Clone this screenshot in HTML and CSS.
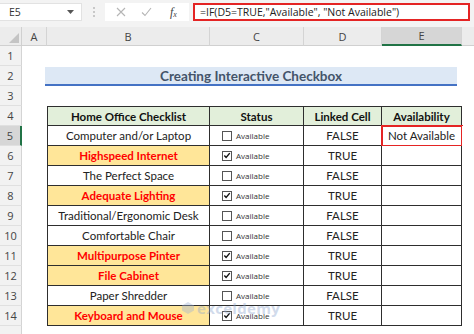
FILE: index.html
```html
<!DOCTYPE html>
<html>
<head>
<meta charset="utf-8">
<link rel="stylesheet" href="styles.css">
</head>
<body>
<div class="app">
  <div class="fbar">
    <div class="namebox"><span>E5</span><svg class="caret" width="7" height="4" viewBox="0 0 7 4"><path d="M0 0h7L3.5 4z" fill="#555"/></svg></div>
    <div class="dots"><i></i><i></i><i></i></div>
    <div class="fxbtns">
      <svg width="10" height="10" viewBox="0 0 10 10"><path d="M1 1l8 8M9 1l-8 8" stroke="#b5b5b5" stroke-width="1.1" fill="none"/></svg>
      <svg width="11" height="10" viewBox="0 0 11 10"><path d="M1 5.5l3 3L10 1" stroke="#b5b5b5" stroke-width="1.1" fill="none"/></svg>
      <span class="fx">f<sub>x</sub></span>
    </div>
    <div class="formula">=IF(D5=TRUE,"Available", "Not Available")</div>
  </div>

  <div class="sheet">
    <div class="corner"><svg width="10" height="10" viewBox="0 0 10 10"><path d="M10 0V10H0z" fill="#c4c4c4"/></svg></div>
    <div class="colh">A</div><div class="colh">B</div><div class="colh">C</div><div class="colh">D</div><div class="colh sel">E</div><div class="colh last"></div>

    <div class="rowh">1</div><div class="c"></div><div class="c"></div><div class="c"></div><div class="c"></div><div class="c"></div><div class="c"></div>

    <div class="rowh">2</div><div class="c"></div><div class="title">Creating Interactive Checkbox</div><div class="c"></div>

    <div class="rowh">3</div><div class="c"></div><div class="c"></div><div class="c"></div><div class="c"></div><div class="c"></div><div class="c"></div>

    <div class="rowh">4</div><div class="c"></div>
    <div class="t th first">Home Office Checklist</div><div class="t th">Status</div><div class="t th">Linked Cell</div><div class="t th">Availability</div><div class="c"></div>

    <div class="rowh sel">5</div><div class="c"></div>
    <div class="t first">Computer and/or Laptop</div><div class="t st"><span class="box"></span>Available</div><div class="t">FALSE</div><div class="t picked">Not Available</div><div class="c"></div>

    <div class="rowh">6</div><div class="c"></div>
    <div class="t first hl">Highspeed Internet</div><div class="t st"><span class="box on"><svg width="9" height="9" viewBox="0 0 9 9"><path d="M1.5 4.5l2 2.2L7.6 1.8" stroke="#111" stroke-width="1.6" fill="none"/></svg></span>Available</div><div class="t">TRUE</div><div class="t"></div><div class="c"></div>

    <div class="rowh">7</div><div class="c"></div>
    <div class="t first">The Perfect Space</div><div class="t st"><span class="box"></span>Available</div><div class="t">FALSE</div><div class="t"></div><div class="c"></div>

    <div class="rowh">8</div><div class="c"></div>
    <div class="t first hl">Adequate Lighting</div><div class="t st"><span class="box on"><svg width="9" height="9" viewBox="0 0 9 9"><path d="M1.5 4.5l2 2.2L7.6 1.8" stroke="#111" stroke-width="1.6" fill="none"/></svg></span>Available</div><div class="t">TRUE</div><div class="t"></div><div class="c"></div>

    <div class="rowh">9</div><div class="c"></div>
    <div class="t first">Traditional/Ergonomic Desk</div><div class="t st"><span class="box"></span>Available</div><div class="t">FALSE</div><div class="t"></div><div class="c"></div>

    <div class="rowh">10</div><div class="c"></div>
    <div class="t first">Comfortable Chair</div><div class="t st"><span class="box"></span>Available</div><div class="t">FALSE</div><div class="t"></div><div class="c"></div>

    <div class="rowh">11</div><div class="c"></div>
    <div class="t first hl">Multipurpose Pinter</div><div class="t st"><span class="box on"><svg width="9" height="9" viewBox="0 0 9 9"><path d="M1.5 4.5l2 2.2L7.6 1.8" stroke="#111" stroke-width="1.6" fill="none"/></svg></span>Available</div><div class="t">TRUE</div><div class="t"></div><div class="c"></div>

    <div class="rowh">12</div><div class="c"></div>
    <div class="t first hl">File Cabinet</div><div class="t st"><span class="box on"><svg width="9" height="9" viewBox="0 0 9 9"><path d="M1.5 4.5l2 2.2L7.6 1.8" stroke="#111" stroke-width="1.6" fill="none"/></svg></span>Available</div><div class="t">TRUE</div><div class="t"></div><div class="c"></div>

    <div class="rowh">13</div><div class="c"></div>
    <div class="t first">Paper Shredder</div><div class="t st"><span class="box"></span>Available</div><div class="t">FALSE</div><div class="t"></div><div class="c"></div>

    <div class="rowh">14</div><div class="c"></div>
    <div class="t first hl">Keyboard and Mouse</div><div class="t st"><span class="box on"><svg width="9" height="9" viewBox="0 0 9 9"><path d="M1.5 4.5l2 2.2L7.6 1.8" stroke="#111" stroke-width="1.6" fill="none"/></svg></span>Available</div><div class="t">TRUE</div><div class="t"></div><div class="c"></div>

    <div class="rowh"></div><div class="c"></div><div class="c"></div><div class="c"></div><div class="c"></div><div class="c"></div><div class="c"></div>

    <div class="watermark"><svg width="12" height="12" viewBox="0 0 12 12"><path d="M6 0L12 3.5V8.5L6 12L0 8.5V3.5z" fill="#9fb3d6"/></svg><span class="wm-text">exceldemy</span></div>
  </div>
</div>
</body>
</html>
```

FILE: styles.css
```css
html, body {
  margin: 0;
  padding: 0;
  background: #ffffff;
  overflow: hidden;
}

.app {
  width: 474px;
  height: 334px;
  overflow: hidden;
  position: relative;
}

/* ---------- formula bar ---------- */
.fbar {
  height: 27px;
  background: #f3f3f3;
  display: flex;
  align-items: flex-start;
  padding-top: 3px;
  box-sizing: border-box;
  font-family: "Open Sans", "Noto Sans", sans-serif;
}

.namebox {
  width: 82px;
  height: 18px;
  background: #ffffff;
  border: 1px solid #e2e2e2;
  border-left: none;
  box-sizing: border-box;
  display: flex;
  align-items: center;
  justify-content: space-between;
  padding: 0 7px 0 9px;
  font-size: 10.5px;
  color: #333;
}

.dots {
  width: 23px;
  height: 18px;
  display: flex;
  flex-direction: column;
  align-items: center;
  justify-content: center;
  gap: 2px;
}
.dots i {
  width: 2px;
  height: 2px;
  background: #c8c8c8;
  display: block;
}

.fxbtns {
  width: 84px;
  height: 18px;
  background: #ffffff;
  display: flex;
  align-items: center;
  gap: 15px;
  padding-left: 11px;
  box-sizing: border-box;
}
.fx {
  font-family: "Liberation Serif", serif;
  font-style: italic;
  font-size: 12px;
  color: #444;
  margin-left: 3px;
}
.fx sub {
  font-size: 8px;
  vertical-align: -1px;
}

.formula {
  margin-left: 4px;
  width: 277px;
  height: 18px;
  background: #ffffff;
  border: 2px solid #e42424;
  box-sizing: border-box;
  font-size: 10.5px;
  line-height: 14px;
  padding-left: 5px;
  color: #222;
  white-space: nowrap;
  overflow: hidden;
}

/* ---------- sheet grid ---------- */
.sheet {
  display: grid;
  grid-template-columns: 22px 25px 163px 94px 78px 80px 12px;
  grid-template-rows: 19px;
  grid-auto-rows: 20px;
  position: relative;
  font-family: "Lato", "Open Sans", sans-serif;
  font-size: 11.5px;
  color: #222;
}

.corner {
  background: #ececec;
  border-right: 1px solid #d0d0d0;
  border-bottom: 1px solid #d0d0d0;
  box-sizing: border-box;
  display: flex;
  align-items: flex-end;
  justify-content: flex-end;
  padding: 0 2px 2px 0;
}

.colh {
  background: #ececec;
  border-right: 1px solid #d4d4d4;
  border-bottom: 1px solid #d0d0d0;
  box-sizing: border-box;
  display: flex;
  align-items: center;
  justify-content: center;
  font-family: "Open Sans", "Noto Sans", sans-serif;
  font-size: 11px;
  color: #444;
}
.colh.sel {
  background: #d6d6d6;
  border-bottom: 2px solid #217346;
}
.colh.last {
  border-right: none;
}

.rowh {
  background: #f2f2f2;
  border-right: 1px solid #d4d4d4;
  border-bottom: 1px solid #e0e0e0;
  box-sizing: border-box;
  display: flex;
  align-items: center;
  justify-content: center;
  font-family: "Open Sans", "Noto Sans", sans-serif;
  font-size: 11px;
  color: #444;
}
.rowh.sel {
  background: #d6d6d6;
  border-right: 2px solid #217346;
}

.c {
  background: #ffffff;
}

.title {
  grid-column: span 4;
  background: #dde8f5;
  border-bottom: 2px solid #4472c4;
  box-sizing: border-box;
  display: flex;
  align-items: center;
  justify-content: center;
  font-weight: 700;
  font-size: 13.5px;
  color: #44546a;
  margin-left: -2px;
  margin-right: 5px;
  margin-top: 1px;
}

.t {
  border-right: 1px solid #2e2e2e;
  border-bottom: 1px solid #2e2e2e;
  box-sizing: border-box;
  display: flex;
  align-items: center;
  justify-content: center;
  white-space: nowrap;
  background: #ffffff;
}
.t.first {
  border-left: 1px solid #2e2e2e;
}
.t.th {
  border-top: 1px solid #2e2e2e;
  background: #e2efda;
  font-weight: 700;
  color: #111;
}
.t.hl {
  background: #ffe699;
  color: #ff0000;
  font-weight: 700;
}
.t.st {
  justify-content: flex-start;
  padding-left: 12px;
  font-family: "Open Sans", "Noto Sans", sans-serif;
  font-size: 8px;
  color: #333;
}
.box {
  width: 10px;
  height: 10px;
  border: 1px solid #555;
  background: #ffffff;
  box-sizing: border-box;
  margin-right: 4px;
  display: flex;
  align-items: center;
  justify-content: center;
}
.t.picked {
  outline: 2px solid #e42424;
  outline-offset: -1px;
}

.watermark {
  position: absolute;
  left: 182px;
  top: 274px;
  display: flex;
  align-items: center;
  gap: 3px;
  opacity: 0.4;
  pointer-events: none;
}
.wm-text {
  font-family: "Open Sans", sans-serif;
  font-weight: 700;
  font-size: 15px;
  line-height: 14px;
  color: #8ea6cf;
  letter-spacing: 0.3px;
}
```
